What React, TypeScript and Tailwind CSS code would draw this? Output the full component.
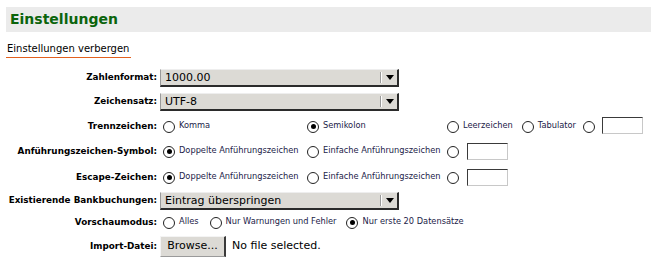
import clsx from "clsx";

type RadioProps = {
  checked?: boolean;
  label?: string;
  className?: string;
};

function Radio({ checked = false, label, className }: RadioProps) {
  return (
    <span className={clsx("flex items-start", className)}>
      <span className="ml-[3px] flex h-[12px] w-[12px] shrink-0 items-center justify-center rounded-full border border-[#222] bg-white">
        {checked ? <span className="h-[5px] w-[5px] rounded-full bg-black" /> : null}
      </span>
      {label ? (
        <span className="ml-[4px] whitespace-nowrap text-[8.25px] leading-[9px] text-[#1b1b48]">{label}</span>
      ) : null}
    </span>
  );
}

function Select({ value }: { value: string }) {
  return (
    <div className="flex h-[18px] w-[239px] border-t border-l border-r-2 border-b-2 border-t-[#eeeeee] border-l-[#9a9a9a] border-r-[#2b2b2b] border-b-[#2b2b2b] bg-[#dcdad5]">
      <span className="flex-1 pl-[4px] text-[11px] leading-[15px] text-black">{value}</span>
      <span className="my-[2px] w-px bg-[#9a9a9a]" />
      <span className="my-[2px] w-px bg-white" />
      <span className="flex w-[15px] items-center justify-center">
        <span className="h-0 w-0 border-x-[4px] border-t-[5px] border-x-transparent border-t-black" />
      </span>
    </div>
  );
}

function TextBox({ className }: { className?: string }) {
  return (
    <span
      className={clsx(
        "block h-[17px] w-[41px] border border-t-[#3a3a3a] border-l-[#3a3a3a] border-b-[#c8c8c8] border-r-[#c8c8c8] bg-white",
        className,
      )}
    />
  );
}

type RowProps = {
  label: string;
  height: string;
  className?: string;
  children: React.ReactNode;
};

function Row({ label, height, className, children }: RowProps) {
  return (
    <div className={clsx("flex items-center", height, className)}>
      <span className="flex w-[157px] shrink-0 justify-end">
        <span className="whitespace-nowrap text-[8.8px] font-bold text-black">{label}</span>
      </span>
      <div className="ml-[3px] flex items-center">{children}</div>
    </div>
  );
}

export default function App() {
  return (
    <div className="h-[259px] w-[651px] overflow-hidden bg-white font-['DejaVu_Sans',sans-serif] text-black">
      <div className="ml-[6px] mt-[7px] flex h-[25px] items-center bg-[#ebebeb] pl-[4px]">
        <h1 className="text-[14px] font-bold text-[#0b640b]">Einstellungen</h1>
      </div>

      <div className="mt-[11px] flex">
        <span className="ml-[6px] block border-b border-[#e2601e] pb-[2px] pl-px pr-[2px] text-[10px] leading-[12px] text-black">
          Einstellungen verbergen
        </span>
      </div>

      <div className="mt-[11px]">
        <Row label="Zahlenformat:" height="h-[18px]">
          <Select value="1000.00" />
        </Row>
        <Row label="Zeichensatz:" height="h-[18px]" className="mt-[6px]">
          <Select value="UTF-8" />
        </Row>
        <Row label="Trennzeichen:" height="h-[19px]" className="mt-[6px]">
          <Radio label="Komma" className="w-[144px]" />
          <Radio checked label="Semikolon" className="w-[140px]" />
          <Radio label="Leerzeichen" className="mr-[6px]" />
          <Radio label="Tabulator" className="mr-[4px]" />
          <Radio className="mr-[7px]" />
          <TextBox className="-mt-[3px]" />
        </Row>
        <Row label="Anführungszeichen-Symbol:" height="h-[19px]" className="mt-[6px]">
          <Radio checked label="Doppelte Anführungszeichen" className="w-[144px]" />
          <Radio label="Einfache Anführungszeichen" className="w-[140px]" />
          <Radio className="mr-[8px]" />
          <TextBox />
        </Row>
        <Row label="Escape-Zeichen:" height="h-[19px]" className="mt-[7px]">
          <Radio checked label="Doppelte Anführungszeichen" className="w-[144px]" />
          <Radio label="Einfache Anführungszeichen" className="w-[140px]" />
          <Radio className="mr-[8px]" />
          <TextBox />
        </Row>
        <Row label="Existierende Bankbuchungen:" height="h-[18px]" className="mt-[5px]">
          <Select value="Eintrag überspringen" />
        </Row>
        <Row label="Vorschaumodus:" height="h-[17px]" className="mt-[4px]">
          <Radio label="Alles" className="mr-[8px]" />
          <Radio label="Nur Warnungen und Fehler" className="mr-[7px]" />
          <Radio checked label="Nur erste 20 Datensätze" />
        </Row>
        <Row label="Import-Datei:" height="h-[21px]" className="mt-[5px]">
          <span className="flex h-[21px] w-[66px] items-center justify-center border-t border-l border-r-2 border-b border-t-[#f4f4f4] border-l-[#f4f4f4] border-r-[#3a3a3a] border-b-[#9a9a9a] bg-[#dcdad5] text-[11px] text-black">
            Browse...
          </span>
          <span className="ml-[6px] text-[11px] text-black">No file selected.</span>
        </Row>
      </div>
    </div>
  );
}
